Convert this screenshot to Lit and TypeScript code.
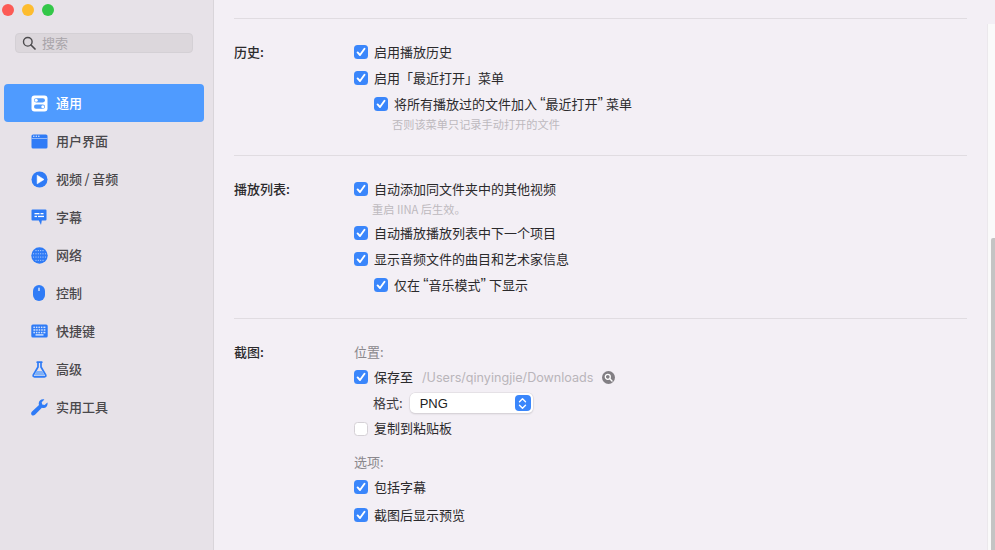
import { LitElement, html, css, svg } from "lit";
import { customElement } from "lit/decorators.js";

const icons: Record<string, unknown> = {
  general: svg`<svg width="17" height="17" viewBox="0 0 17 17"><rect x="0.5" y="0.5" width="16" height="16" rx="3" fill="#fff"/><rect x="3" y="3.2" width="11" height="4.2" rx="2.1" fill="#4f9bff"/><rect x="3" y="9.6" width="11" height="4.2" rx="2.1" fill="#4f9bff"/><circle cx="5.2" cy="5.3" r="1.5" fill="#fff"/><circle cx="11.8" cy="11.7" r="1.5" fill="#fff"/></svg>`,
  ui: svg`<svg width="17" height="15" viewBox="0 0 17 15"><rect x="0.5" y="0.5" width="16" height="14" rx="1.6" fill="#2f7bf6"/><rect x="0.5" y="4" width="16" height="0.8" fill="#a9c9fb"/><circle cx="2.8" cy="2.3" r="0.8" fill="#d5e4fd"/><circle cx="5.3" cy="2.3" r="0.8" fill="#d5e4fd"/><circle cx="7.8" cy="2.3" r="0.8" fill="#d5e4fd"/></svg>`,
  video: svg`<svg width="17" height="17" viewBox="0 0 17 17"><circle cx="8.5" cy="8.5" r="8" fill="#2f7bf6"/><path d="M6.2 4.2 L13 8.5 L6.2 12.8 Z" fill="#fff" stroke="#fff" stroke-width="0.6" stroke-linejoin="round"/></svg>`,
  subtitle: svg`<svg width="16" height="17" viewBox="0 0 16 17"><path d="M1.5 0.5 H14.5 Q15.5 0.5 15.5 1.5 V10.5 Q15.5 11.5 14.5 11.5 H10.8 L10 16 L7.8 11.5 H1.5 Q0.5 11.5 0.5 10.5 V1.5 Q0.5 0.5 1.5 0.5 Z" fill="#2f7bf6"/><rect x="3.5" y="4" width="5" height="1.3" fill="#fff"/><rect x="9.5" y="4" width="3" height="1.3" fill="#fff"/><rect x="3.5" y="6.8" width="2.5" height="1.3" fill="#fff"/><rect x="7" y="6.8" width="6" height="1.3" fill="#fff"/></svg>`,
  network: svg`<svg width="17" height="17" viewBox="0 0 17 17"><circle cx="8.5" cy="8.5" r="8.2" fill="#2f7bf6"/><g fill="#cfe0fd"><circle cx="5" cy="3.6" r="0.55"/><circle cx="7.3" cy="3.6" r="0.55"/><circle cx="9.7" cy="3.6" r="0.55"/><circle cx="12" cy="3.6" r="0.55"/><circle cx="2.6" cy="6.8" r="0.55"/><circle cx="5" cy="6.8" r="0.55"/><circle cx="7.3" cy="6.8" r="0.55"/><circle cx="9.7" cy="6.8" r="0.55"/><circle cx="12" cy="6.8" r="0.55"/><circle cx="14.4" cy="6.8" r="0.55"/><circle cx="2.6" cy="10" r="0.55"/><circle cx="5" cy="10" r="0.55"/><circle cx="7.3" cy="10" r="0.55"/><circle cx="9.7" cy="10" r="0.55"/><circle cx="12" cy="10" r="0.55"/><circle cx="14.4" cy="10" r="0.55"/><circle cx="5" cy="13.2" r="0.55"/><circle cx="7.3" cy="13.2" r="0.55"/><circle cx="9.7" cy="13.2" r="0.55"/><circle cx="12" cy="13.2" r="0.55"/></g></svg>`,
  control: svg`<svg width="12" height="16" viewBox="0 0 12 16"><rect x="0" y="0" width="12" height="16" rx="6" fill="#2f7bf6"/><rect x="5.4" y="2.4" width="1.2" height="3.6" rx="0.6" fill="#fff"/></svg>`,
  keyboard: svg`<svg width="17" height="14" viewBox="0 0 17 14"><rect x="0.3" y="0.5" width="16.4" height="13" rx="1.6" fill="#2f7bf6"/><g fill="#d5e4fd"><rect x="2.4" y="2.6" width="1.5" height="1.5"/><rect x="4.9" y="2.6" width="1.5" height="1.5"/><rect x="7.4" y="2.6" width="1.5" height="1.5"/><rect x="9.9" y="2.6" width="1.5" height="1.5"/><rect x="12.4" y="2.6" width="2" height="1.5"/><rect x="2.4" y="5.2" width="2" height="1.5"/><rect x="5.2" y="5.2" width="1.5" height="1.5"/><rect x="7.7" y="5.2" width="1.5" height="1.5"/><rect x="10.2" y="5.2" width="1.5" height="1.5"/><rect x="12.7" y="5.2" width="1.7" height="1.5"/><rect x="2.4" y="7.8" width="1.5" height="1.5"/><rect x="4.9" y="7.8" width="1.5" height="1.5"/><rect x="7.4" y="7.8" width="1.5" height="1.5"/><rect x="9.9" y="7.8" width="1.5" height="1.5"/><rect x="12.4" y="7.8" width="2" height="1.5"/><rect x="4.5" y="10.2" width="8" height="1.4"/></g></svg>`,
  advanced: svg`<svg width="15" height="17" viewBox="0 0 15 17"><path d="M5.2 1.2 H9.8 M6 1.2 V6 L1.3 14 Q0.7 15.8 2.5 15.8 H12.5 Q14.3 15.8 13.7 14 L9 6 V1.2" fill="none" stroke="#2f7bf6" stroke-width="1.7" stroke-linecap="round" stroke-linejoin="round"/><path d="M4.5 10 H10.5 L12.6 14.6 H2.4 Z" fill="#7fb0f8"/></svg>`,
  tools: svg`<svg width="17" height="17" viewBox="0 0 17 17"><path d="M16.4 3.4 L13.6 6.1 L11.2 5.6 L10.7 3.2 L13.4 0.5 C10.6 -0.4 7.6 1.6 7.7 4.6 C7.7 5.2 7.8 5.6 8 6 L1 12.6 C-0.2 13.8 -0.1 15.2 0.7 16 C1.5 16.8 2.9 16.9 4 15.8 L10.9 8.8 C11.4 9 12 9.1 12.6 9.1 C15.5 8.9 17.2 6.1 16.4 3.4 Z" fill="#2f7bf6"/></svg>`,
};

const nav = [
  ["general", "通用"],
  ["ui", "用户界面"],
  ["video", "视频\u2009/\u2009音频"],
  ["subtitle", "字幕"],
  ["network", "网络"],
  ["control", "控制"],
  ["keyboard", "快捷键"],
  ["advanced", "高级"],
  ["tools", "实用工具"],
];

const check = svg`<svg width="10" height="10" viewBox="0 0 10 10"><path d="M1.6 5.4 L4 8 L8.5 1.8" fill="none" stroke="#fff" stroke-width="1.9" stroke-linecap="round" stroke-linejoin="round"/></svg>`;

@customElement("app-root")
export class AppRoot extends LitElement {
  static styles = css`
    :host {
      display: flex;
      width: 995px;
      height: 550px;
      overflow: hidden;
      background: #f3eff5;
      font-family: "Noto Sans CJK SC", "Noto Sans", sans-serif;
      font-size: 13px;
      color: #2b2a2c;
    }
    .side {
      width: 213px;
      flex: none;
      height: 550px;
      background: #e7e2e8;
      border-right: 1px solid #d9d5da;
      display: flex;
      flex-direction: column;
    }
    .lights { display: flex; gap: 8px; padding: 4px 0 0 2px; height: 12px; }
    .light { width: 12px; height: 12px; border-radius: 50%; }
    .red { background: #fc5a55; }
    .yellow { background: #fdbc2e; }
    .green { background: #33c748; }
    .search {
      margin: 17px 0 0 15px;
      width: 178px;
      height: 20px;
      box-sizing: border-box;
      background: #dcd7dc;
      border: 1px solid #d4d0d5;
      border-radius: 4px;
      display: flex;
      align-items: center;
      gap: 6px;
      padding-left: 6px;
      color: #a9a5aa;
    }
    .search span { padding-bottom: 2px; }
    .items { margin-top: 31px; display: flex; flex-direction: column; }
    .item {
      height: 38px;
      margin: 0 9px 0 4px;
      display: flex;
      align-items: center;
      font-weight: 500;
      color: #4a484b;
      border-radius: 4px;
    }
    .item.on { background: #4f9bff; color: #fff; }
    .item .t { padding-bottom: 2px; }
    .ic { width: 18px; margin-left: 26px; margin-right: 8px; display: flex; justify-content: center; align-items: center; }
    .main { flex: 1; position: relative; padding: 18px 28px 0 20px; box-sizing: border-box; min-width: 0; }
    .sec { display: flex; border-top: 1px solid #e0dce1; box-sizing: border-box; }
    .s1 { height: 137px; padding-top: 20px; }
    .s2 { height: 163px; padding-top: 20px; }
    .s3 { padding-top: 20px; }
    .label { width: 120px; flex: none; font-weight: 500; color: #2b2a2c; }
    .label span { display: flex; align-items: center; height: 24px; padding-bottom: 2px; }
    .opts { flex: 1; display: flex; flex-direction: column; }
    .row { height: 26px; display: flex; align-items: center; gap: 6px; flex: none; }
    .row .t { padding-bottom: 2px; }
    .row.sub { padding-left: 20px; }
    .row.tight { height: 25px; }
    .q { display: inline-block; width: 8.5px; font-family: "Liberation Sans", sans-serif; font-size: 16px; line-height: 1; }
    .q.open { text-align: right; }
    .q.close { text-align: left; }
    .cb {
      width: 14px; height: 14px; box-sizing: border-box; border-radius: 3.5px; background: #3a86fb;
      display: flex; align-items: center; justify-content: center; flex: none;
    }
    .cb.off { background: #fff; border: 1px solid #d5d1d6; }
    .hint { font-size: 11.2px; color: #bdb9be; height: 15px; line-height: 15px; flex: none; }
    .hint.h1 { padding-left: 38px; }
    .hint.h2 { padding-left: 18px; }
    .gap3 { height: 3px; flex: none; }
    .gap2 { height: 2px; flex: none; }
    .head { color: #8a878c; height: 25px; display: flex; align-items: center; flex: none; }
    .head.second { margin-top: 8px; }
    .path { font-family: Inter, "Liberation Sans", sans-serif; color: #b9b5ba; margin-left: 3px; font-size: 12.6px; }
    .mag {
      width: 13px; height: 13px; border-radius: 50%; background: #827f84; margin-left: 3px;
      display: flex; align-items: center; justify-content: center;
    }
    .fmt { padding-left: 19px; gap: 7px; color: #3c3a3d; }
    .select {
      width: 123px; height: 20px; box-sizing: border-box; background: #fff; border-radius: 5px;
      box-shadow: 0 0 0 0.5px #d9d5da, 0 1px 2px rgba(0,0,0,0.16);
      display: flex; align-items: center; justify-content: space-between; padding: 0 2px 0 10px;
      font-family: "Liberation Sans", sans-serif; font-size: 13px; color: #222;
    }
    .stepper {
      width: 16px; height: 16px; border-radius: 4px; background: #3a86fb; display: flex; align-items: center; justify-content: center;
    }
    .scroll { position: absolute; top: 24px; right: 0; bottom: 0; width: 8px; background: #fafafa; border-left: 1px solid #ebe8ec; box-sizing: border-box; }
    .thumb { position: absolute; top: 214px; bottom: 0; right: 0; width: 4px; background: #c4c4c4; border-radius: 2px 0 0 0; }
  `;

  private cb(text: unknown, cls = "", on = true) {
    return html`<div class="row ${cls}">
      <span class="cb ${on ? "" : "off"}">${on ? check : ""}</span><span class="t">${text}</span>
    </div>`;
  }

  render() {
    return html`
      <aside class="side">
        <div class="lights">
          <span class="light red"></span><span class="light yellow"></span><span class="light green"></span>
        </div>
        <div class="search">
          <svg width="14" height="14" viewBox="0 0 14 14"><circle cx="5.8" cy="5.8" r="4.3" fill="none" stroke="#4d4b4e" stroke-width="1.4"/><path d="M9 9 L13 13" stroke="#4d4b4e" stroke-width="1.7" stroke-linecap="round"/></svg>
          <span>搜索</span>
        </div>
        <nav class="items">
          ${nav.map(
            ([k, t], i) => html`<div class="item ${i === 0 ? "on" : ""}"><span class="ic">${icons[k]}</span><span class="t">${t}</span></div>`
          )}
        </nav>
      </aside>
      <main class="main">
        <section class="sec s1">
          <div class="label"><span>历史:</span></div>
          <div class="opts">
            ${this.cb("启用播放历史")}
            ${this.cb("启用「最近打开」菜单")}
            ${this.cb(html`将所有播放过的文件加入<span class="q open">“</span>最近打开<span class="q close">”</span>菜单`, "sub")}
            <div class="hint h1">否则该菜单只记录手动打开的文件</div>
          </div>
        </section>
        <section class="sec s2">
          <div class="label"><span>播放列表:</span></div>
          <div class="opts">
            ${this.cb("自动添加同文件夹中的其他视频")}
            <div class="hint h2">重启 IINA 后生效。</div>
            <div class="gap3"></div>
            ${this.cb("自动播放播放列表中下一个项目")}
            ${this.cb("显示音频文件的曲目和艺术家信息")}
            ${this.cb(html`仅在<span class="q open">“</span>音乐模式<span class="q close">”</span>下显示`, "sub")}
          </div>
        </section>
        <section class="sec s3">
          <div class="label"><span>截图:</span></div>
          <div class="opts">
            <div class="head">位置:</div>
            <div class="row">
              <span class="cb">${check}</span><span class="t">保存至</span>
              <span class="path">/Users/qinyingjie/Downloads</span>
              <span class="mag"><svg width="9" height="9" viewBox="0 0 9 9"><circle cx="3.8" cy="3.8" r="2.5" fill="none" stroke="#fff" stroke-width="1.3"/><path d="M5.8 5.8 L8 8" stroke="#fff" stroke-width="1.4" stroke-linecap="round"/></svg></span>
            </div>
            <div class="row fmt">
              <span class="t">格式:</span>
              <div class="select">
                <span>PNG</span>
                <span class="stepper"><svg width="9" height="13" viewBox="0 0 9 13"><path d="M1.5 4.8 L4.5 1.8 L7.5 4.8 M1.5 8.2 L4.5 11.2 L7.5 8.2" fill="none" stroke="#fff" stroke-width="1.4" stroke-linecap="round" stroke-linejoin="round"/></svg></span>
              </div>
            </div>
            ${this.cb("复制到粘贴板", "tight", false)}
            <div class="head second">选项:</div>
            ${this.cb("包括字幕")}
            <div class="gap2"></div>
            ${this.cb("截图后显示预览")}
          </div>
        </section>
        <div class="scroll"><div class="thumb"></div></div>
      </main>
    `;
  }
}
